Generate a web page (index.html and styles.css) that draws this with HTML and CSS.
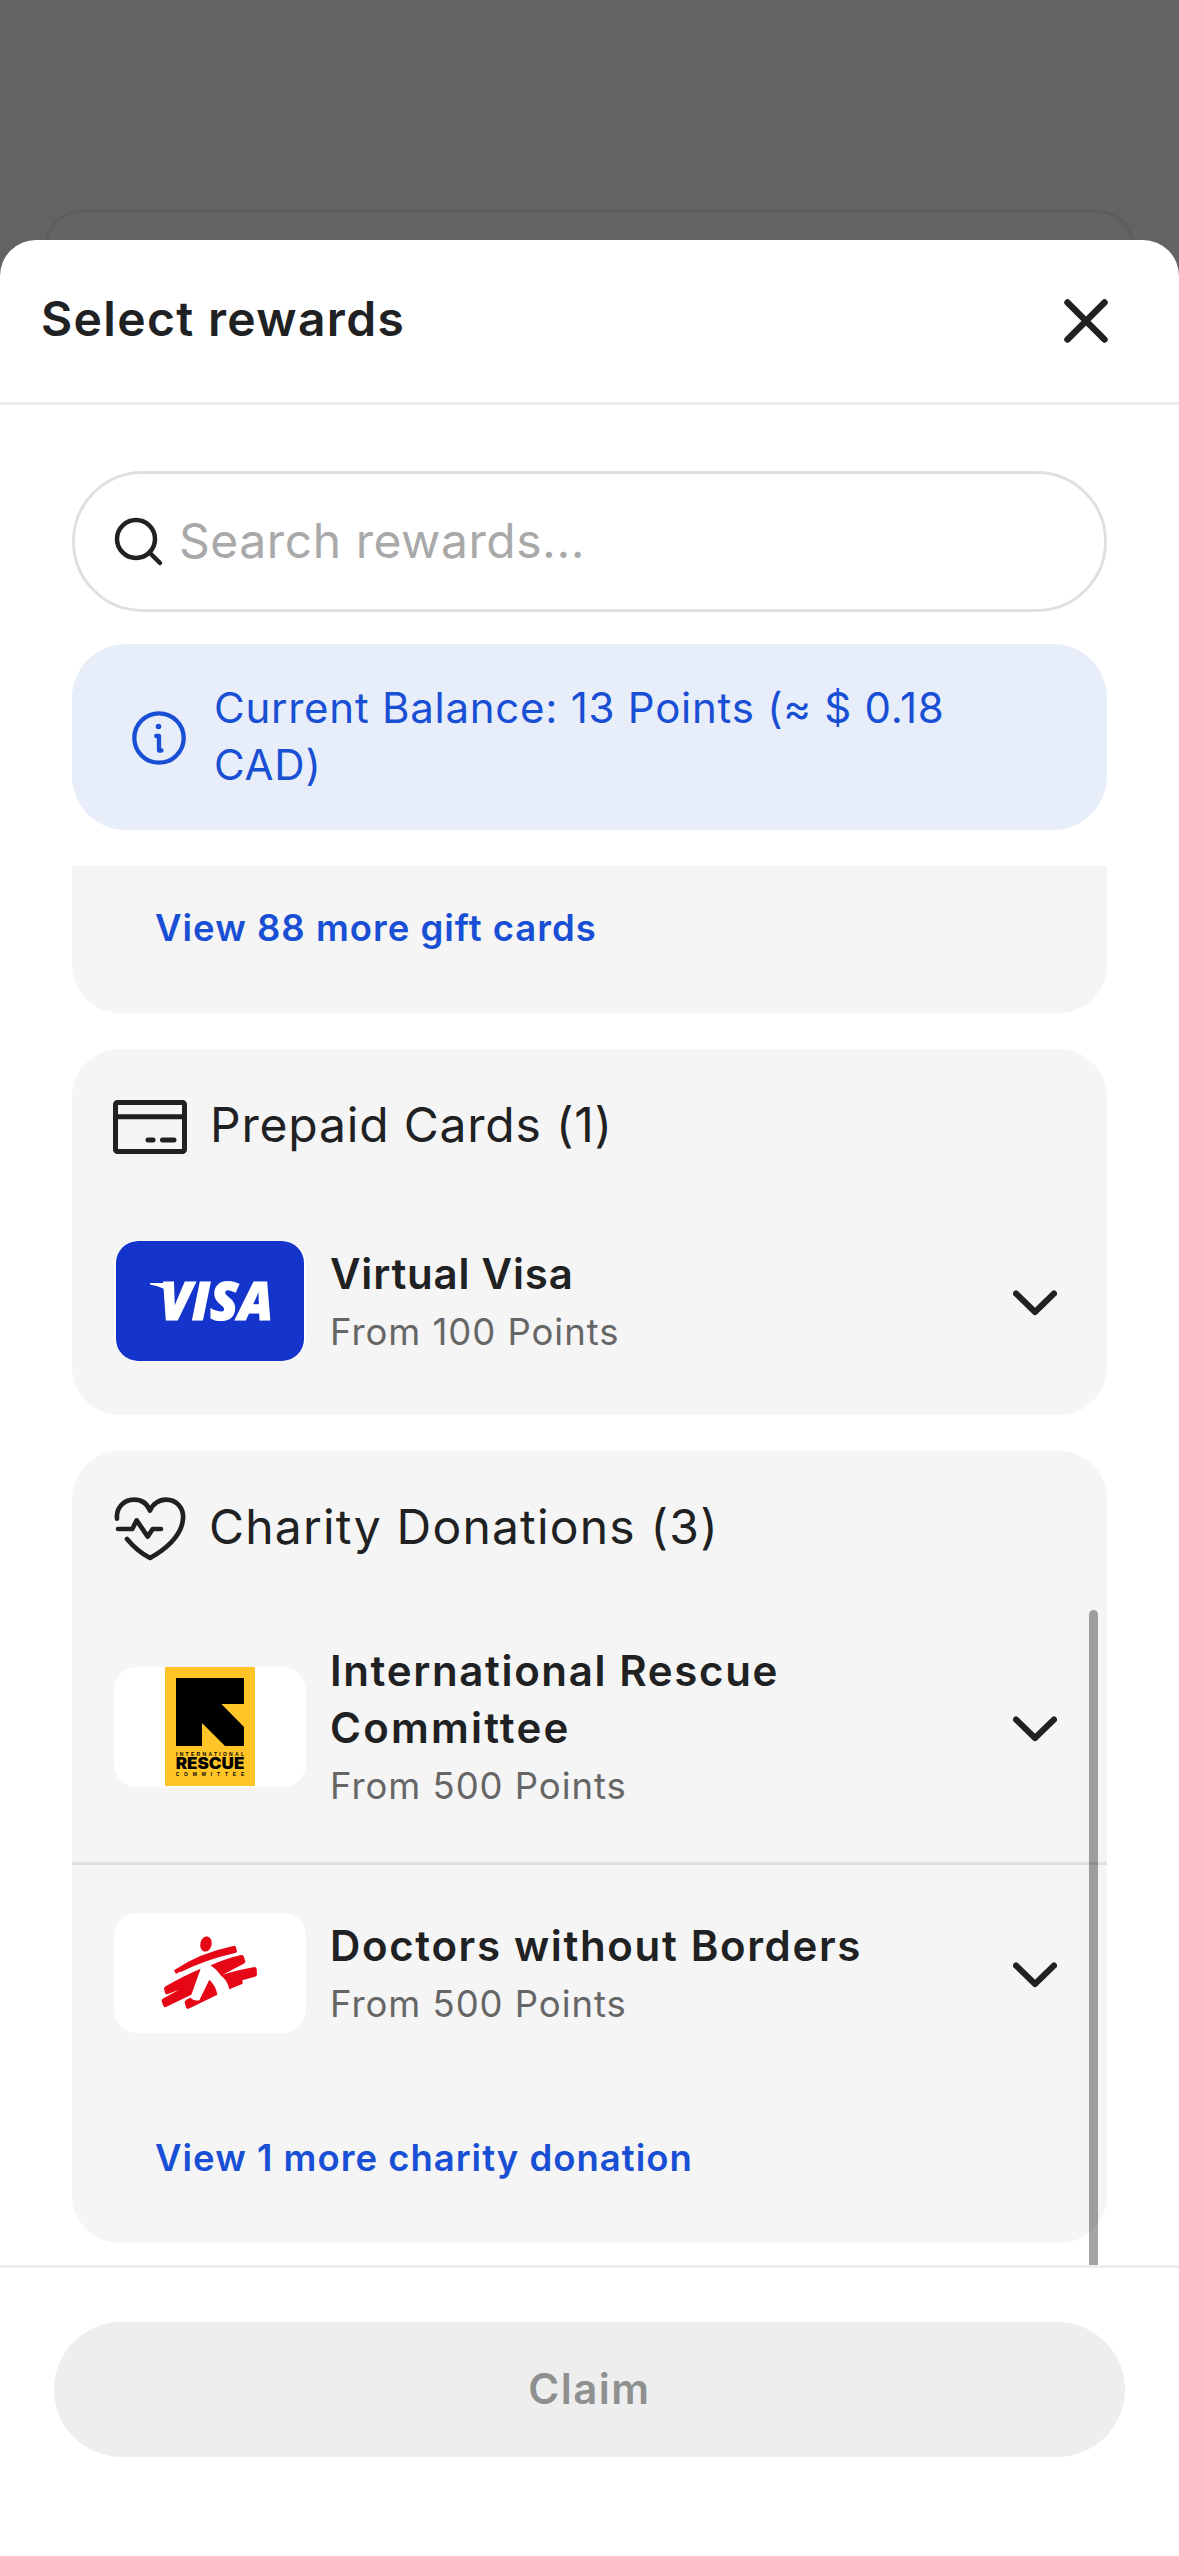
FILE: index.html
```html
<!DOCTYPE html>
<html lang="en">
<head>
<meta charset="utf-8">
<title>Select rewards</title>
<link rel="stylesheet" href="styles.css">
</head>
<body>
<div class="screen">
  <div class="page-card"></div>
  <section class="sheet">
    <header class="sheet-header">
      <h1 class="sheet-title">Select rewards</h1>
      <svg class="close" viewBox="0 0 44 44"><path d="M3.500 3.500 40.500 40.500M40.500 3.500 3.500 40.500"/></svg>
    </header>
    <div class="content">
      <div class="search">
        <svg class="search-icon" viewBox="0 0 50 50"><circle cx="22" cy="22" r="19"/><path d="M36 36 46 46"/></svg>
        <span class="placeholder">Search rewards...</span>
      </div>
      <div class="balance">
        <svg class="info-icon" viewBox="0 0 54 54"><circle cx="27" cy="27" r="24.700"/><circle class="dot" cx="26.500" cy="15.500" r="2.800"/><path d="M24.200 25H27V39.500M27 39.500H29.500"/></svg>
        <p class="balance-text">Current Balance: 13 Points (≈ $ 0.18 CAD)</p>
      </div>
      <div class="list">
        <div class="card card-clipped">
          <a class="more">View 88 more gift cards</a>
        </div>
        <div class="card">
          <div class="card-head">
            <svg class="card-icon" viewBox="0 0 74 54"><rect x="2.500" y="2.500" width="69" height="49" rx="2"/><path d="M2.500 16.700H71.500"/><path class="round" d="M35 40H40M49.500 40H61"/></svg>
            <h2 class="prepaid">Prepaid Cards (1)</h2>
          </div>
          <div class="row row-single">
            <svg class="tile" viewBox="0 0 192 120"><rect x="2" width="188" height="120" rx="22" fill="#1434cb"/><path d="M36 42H50Q56 42 58 50L60 56Q52 46 36 43.500Z" fill="#fff"/><text class="visa" x="46" y="79" textLength="113" lengthAdjust="spacingAndGlyphs">VISA</text></svg>
            <div class="info"><h3>Virtual Visa</h3><p>From 100 Points</p></div>
            <svg class="chevron" viewBox="0 0 44 26"><path d="M3 3.500 22 22 41 3.500"/></svg>
          </div>
        </div>
        <div class="card">
          <div class="card-head">
            <svg class="heart-icon" viewBox="162 198 216 198"><path d="M171 266C168 235 190 209 222 209C245 209 262 222 270 242C278 222 297 209 318 209C350 209 372 235 369 266C366 320 310 362 270 384C245 371 220 350 201 327M174 297H217L230 271L263 320L278 297H303"/></svg>
            <h2 class="charity">Charity Donations (3)</h2>
          </div>
          <div class="row row-tall">
            <svg class="tile" viewBox="42 51 576 360"><rect x="195" y="51" width="270" height="357" fill="#ffc426"/><path d="M228 84H432V162H364L432 231V288H375L306 219V288H228Z" fill="#000"/><text class="irc-small" x="228" y="317" textLength="204">INTERNATIONAL</text><text class="irc-big" x="227" y="358" textLength="206" lengthAdjust="spacingAndGlyphs">RESCUE</text><text class="irc-small" x="227" y="378" textLength="206">COMMITTEE</text></svg>
            <div class="info"><h3 class="long-name">International Rescue <span class="committee">Committee</span></h3><p>From 500 Points</p></div>
            <svg class="chevron" viewBox="0 0 44 26"><path d="M3 3.500 22 22 41 3.500"/></svg>
          </div>
          <div class="row row-divided">
            <svg class="tile" viewBox="42 39 576 360"><g fill="#e60716"><ellipse cx="318" cy="132" rx="17" ry="23" transform="rotate(12 318 132)"/><path d="M222 211Q295 160 400 138Q406 136 408 142L411 154Q411 158 406 159Q320 178 242 216L239 215 228 222Z"/><path d="M332 196Q375 176 423 165Q429 164 431 169L436 183Q437 188 431 191L367 225Q410 210 464 201Q469 201 470 206L471 223Q471 229 465 230L427 241 428 251 388 268Q382 240 364 228Q350 208 332 196Z"/><path d="M302 206 274 284 198 321Q193 323 190 317L185 304Q184 299 188 296L237 269 204 282Q197 284 195 278L192 266Q192 262 197 259Q245 230 302 206Z"/><path d="M328 239Q348 258 352 284L266 326Q260 328 258 322L254 308Q254 303 258 300Q264 296 271 293Q282 304 298 301Z"/></g></svg>
            <div class="info"><h3 class="long-name">Doctors without Borders</h3><p>From 500 Points</p></div>
            <svg class="chevron" viewBox="0 0 44 26"><path d="M3 3.500 22 22 41 3.500"/></svg>
          </div>
          <a class="more more-charity">View 1 more charity donation</a>
        </div>
        <div class="scrollbar"></div>
      </div>
    </div>
    <footer class="footer"><button class="claim">Claim</button></footer>
  </section>
</div>
</body>
</html>
```
FILE: styles.css
```css
* { box-sizing: border-box; margin: 0; padding: 0; }
body { background: #626365; font-family: Inter, "Liberation Sans", sans-serif; color: #202122; }
svg { display: block; flex: none; fill: none; }
.screen { position: relative; height: 2556px; padding-top: 240px; overflow: hidden; }
.page-card { position: absolute; top: 210px; left: 45px; width: 1089px; height: 100px; border: 3px solid #5c5e5c; border-radius: 36px; background: #636562; }
.sheet { position: relative; display: flex; flex-direction: column; height: 2316px; border-radius: 36px 36px 0 0; background: #fff; }
.sheet-header { display: flex; justify-content: space-between; align-items: center; height: 165px; padding: 0 71px 0 41px; border-bottom: 3px solid #ededed; }
.sheet-title { padding-bottom: 5px; font-size: 48px; line-height: 60px; font-weight: 600; letter-spacing: 1.350px; }
.close { width: 44px; height: 44px; stroke: #202122; stroke-width: 6.500; stroke-linecap: round; }
.content { display: flex; flex-direction: column; padding: 66px 72px 0; height: 1860px; }
.search { display: flex; align-items: center; gap: 15px; flex: none; height: 141px; padding-left: 39px; border: 3px solid #e0e0e0; border-radius: 71px; }
.search-icon { width: 50px; height: 50px; stroke: #202122; stroke-width: 4.500; stroke-linecap: round; }
.placeholder { padding-bottom: 3px; font-size: 48px; letter-spacing: 0.550px; color: #a9a9a9; }
.balance { display: flex; align-items: center; flex: none; gap: 28px; height: 186px; margin-top: 32px; padding-left: 60px; border-radius: 54px; background: #e7edf9; color: #184fd4; }
.info-icon { width: 54px; height: 54px; margin-top: 2px; stroke: #184fd4; stroke-width: 4.300; stroke-linecap: round; stroke-linejoin: round; }
.info-icon .dot { fill: #184fd4; stroke: none; }
.balance-text { width: 780px; padding-bottom: 2px; font-size: 42px; line-height: 57px; letter-spacing: 0.750px; }
.list { position: relative; flex: 1; min-height: 0; margin-top: 36px; overflow: hidden; }
.card { margin-bottom: 36px; border-radius: 48px; background: #f5f5f5; }
.card-clipped { height: 147px; padding-top: 35px; border-radius: 0 0 48px 48px; }
.more { display: block; padding-left: 83px; font-size: 36.500px; line-height: 54px; font-weight: 600; letter-spacing: 1px; color: #184fd4; }
.card-head { display: flex; align-items: center; height: 156px; padding-left: 41px; }
.card-icon { width: 74px; height: 54px; stroke: #202122; stroke-width: 5; }
.round { stroke-linecap: round; }
.heart-icon { width: 72px; height: 66px; margin-left: 1px; stroke: #202122; stroke-width: 14; stroke-linecap: round; stroke-linejoin: round; }
h2 { margin-left: 23px; padding-bottom: 4px; font-size: 48px; line-height: 60px; font-weight: 400; }
.prepaid { letter-spacing: 0.800px; }
.charity { letter-spacing: 1.200px; }
.row { display: flex; align-items: center; padding: 33px 50px 48px 42px; }
.row-single { padding-top: 36px; padding-bottom: 54px; }
.row-tall { padding-bottom: 49px; }
.row-divided { padding-top: 48px; border-top: 3px solid #e0e0e0; }
.tile { width: 192px; height: 120px; border-radius: 23px; background: #fff; overflow: hidden; }
.visa { font: italic 800 53px "Open Sans", sans-serif; fill: #fff; stroke: #fff; stroke-width: 1.200; }
.irc-small { font: 700 15px "Liberation Sans", sans-serif; fill: #000; }
.irc-big { font: 900 47px Inter, sans-serif; fill: #000; }
.info { width: 0; flex: 1; padding-left: 24px; }
.info h3 { padding-top: 2px; font-size: 42px; line-height: 57px; font-weight: 600; letter-spacing: 0.800px; }
.info .long-name { max-width: 560px; letter-spacing: 1.650px; }
.info .committee { letter-spacing: 2.200px; }
.info p { margin-top: 3px; font-size: 36.500px; line-height: 54px; letter-spacing: 0.950px; color: #666; }
.chevron { width: 44px; height: 26px; margin-top: 4px; stroke: #202122; stroke-width: 6; stroke-linecap: round; stroke-linejoin: round; }
.more-charity { padding-top: 50px; padding-bottom: 58px; }
.scrollbar { position: absolute; top: 744px; right: 9px; width: 9px; height: 700px; border-radius: 5px; background: rgba(0, 5, 3, 0.36); }
.footer { padding: 54px; border-top: 3px solid #ededed; }
.claim { display: block; width: 100%; height: 135px; padding-bottom: 2px; border: 0; border-radius: 68px; background: #eee; color: #8f9090; font: 600 42px/60px Inter, sans-serif; letter-spacing: 1.500px; }
```
